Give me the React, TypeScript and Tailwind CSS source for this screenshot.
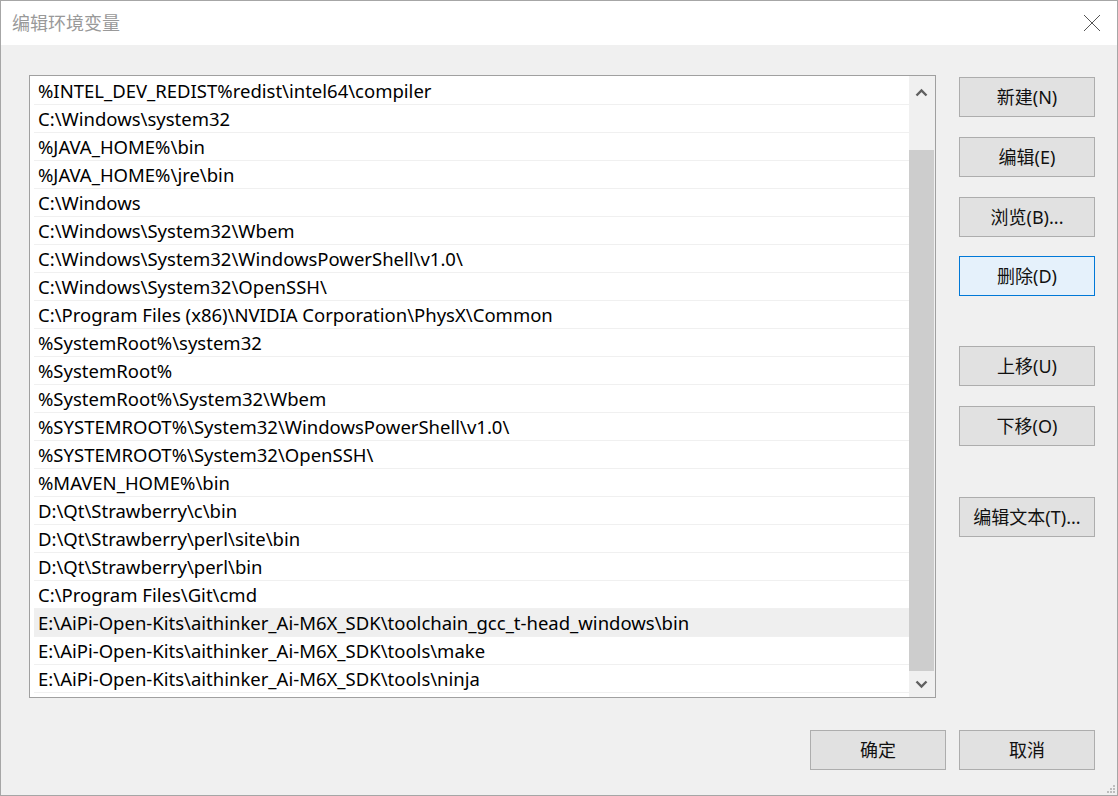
import React from "react";

const paths = [
  "%INTEL_DEV_REDIST%redist\\intel64\\compiler",
  "C:\\Windows\\system32",
  "%JAVA_HOME%\\bin",
  "%JAVA_HOME%\\jre\\bin",
  "C:\\Windows",
  "C:\\Windows\\System32\\Wbem",
  "C:\\Windows\\System32\\WindowsPowerShell\\v1.0\\",
  "C:\\Windows\\System32\\OpenSSH\\",
  "C:\\Program Files (x86)\\NVIDIA Corporation\\PhysX\\Common",
  "%SystemRoot%\\system32",
  "%SystemRoot%",
  "%SystemRoot%\\System32\\Wbem",
  "%SYSTEMROOT%\\System32\\WindowsPowerShell\\v1.0\\",
  "%SYSTEMROOT%\\System32\\OpenSSH\\",
  "%MAVEN_HOME%\\bin",
  "D:\\Qt\\Strawberry\\c\\bin",
  "D:\\Qt\\Strawberry\\perl\\site\\bin",
  "D:\\Qt\\Strawberry\\perl\\bin",
  "C:\\Program Files\\Git\\cmd",
  "E:\\AiPi-Open-Kits\\aithinker_Ai-M6X_SDK\\toolchain_gcc_t-head_windows\\bin",
  "E:\\AiPi-Open-Kits\\aithinker_Ai-M6X_SDK\\tools\\make",
  "E:\\AiPi-Open-Kits\\aithinker_Ai-M6X_SDK\\tools\\ninja",
];

const font = "font-['Microsoft_YaHei_UI','Noto_Sans','Noto_Sans_CJK_SC',sans-serif]";

function Btn({ label, active, className }: { label: string; active?: boolean; className?: string }) {
  return (
    <button
      className={
        "w-[136px] h-[40px] border text-[18px] text-[#111] flex items-center justify-center " +
        (active ? "border-[#0078d7] bg-[#e5f1fb] " : "border-[#adadad] bg-[#e1e1e1] ") +
        (className ?? "")
      }
    >
      {label}
    </button>
  );
}

export default function App() {
  const selected = 19;
  return (
    <div className={"w-[1118px] h-[796px] border border-[#a6a6a6] flex flex-col " + font}>
      {/* title bar */}
      <div className="h-[44px] bg-white flex items-center justify-between pl-[11px] pr-[16px]">
        <span className="text-[18px] text-[#999]">编辑环境变量</span>
        <svg width="18" height="18" viewBox="0 0 18 18">
          <path d="M1 1L17 17M17 1L1 17" stroke="#555" strokeWidth="1" />
        </svg>
      </div>

      {/* body */}
      <div className="flex-1 bg-[#f0f0f0] relative flex flex-col pl-[28px] pt-[30px]">
        <div className="flex">
          {/* list */}
          <div className="w-[907px] h-[623px] border border-[#a0a0a0] bg-white flex">
            <div className="flex-1 pl-[4px] pt-[1px]">
              {paths.map((p, i) => (
                <div
                  key={i}
                  className={
                    "h-[28px] border-b border-[#f0f0f0] flex items-center pl-[4px] pt-[1px] text-[18.5px] text-black whitespace-nowrap " +
                    (i === selected ? "bg-[#efefef]" : "")
                  }
                >
                  {p}
                </div>
              ))}
            </div>
            {/* scrollbar */}
            <div className="w-[26px] bg-[#f0f0f0] flex flex-col pr-[1px]">
              <div className="h-[32px] flex items-center justify-center">
                <svg width="13" height="9" viewBox="0 0 13 9">
                  <path d="M1.5 7.5L6.5 2.5L11.5 7.5" stroke="#606060" strokeWidth="2.4" fill="none" />
                </svg>
              </div>
              <div className="h-[42px]" />
              <div className="flex-1 bg-[#cdcdcd]" />
              <div className="h-[26px] flex items-center justify-center">
                <svg width="13" height="9" viewBox="0 0 13 9">
                  <path d="M1.5 1.5L6.5 6.5L11.5 1.5" stroke="#606060" strokeWidth="2.4" fill="none" />
                </svg>
              </div>
            </div>
          </div>

          {/* side buttons */}
          <div className="ml-[23px] pt-[2px] flex flex-col">
            <Btn label="新建(N)" />
            <Btn label="编辑(E)" className="mt-[20px]" />
            <Btn label="浏览(B)..." className="mt-[20px]" />
            <Btn label="删除(D)" active className="mt-[19px]" />
            <Btn label="上移(U)" className="mt-[50px]" />
            <Btn label="下移(O)" className="mt-[20px]" />
            <Btn label="编辑文本(T)..." className="mt-[51px]" />
          </div>
        </div>

        {/* bottom buttons */}
        <div className="flex justify-end gap-[13px] pr-[22px] mt-[32px]">
          <Btn label="确定" />
          <Btn label="取消" />
        </div>

        {/* resize grip */}
        <svg className="absolute right-[1px] bottom-[1px]" width="10" height="10" viewBox="0 0 10 10">
          <rect x="7" y="1" width="2" height="2" fill="#bdbdbd" />
          <rect x="4" y="4" width="2" height="2" fill="#bdbdbd" />
          <rect x="7" y="4" width="2" height="2" fill="#bdbdbd" />
          <rect x="1" y="7" width="2" height="2" fill="#bdbdbd" />
          <rect x="4" y="7" width="2" height="2" fill="#bdbdbd" />
          <rect x="7" y="7" width="2" height="2" fill="#bdbdbd" />
        </svg>
      </div>
    </div>
  );
}
